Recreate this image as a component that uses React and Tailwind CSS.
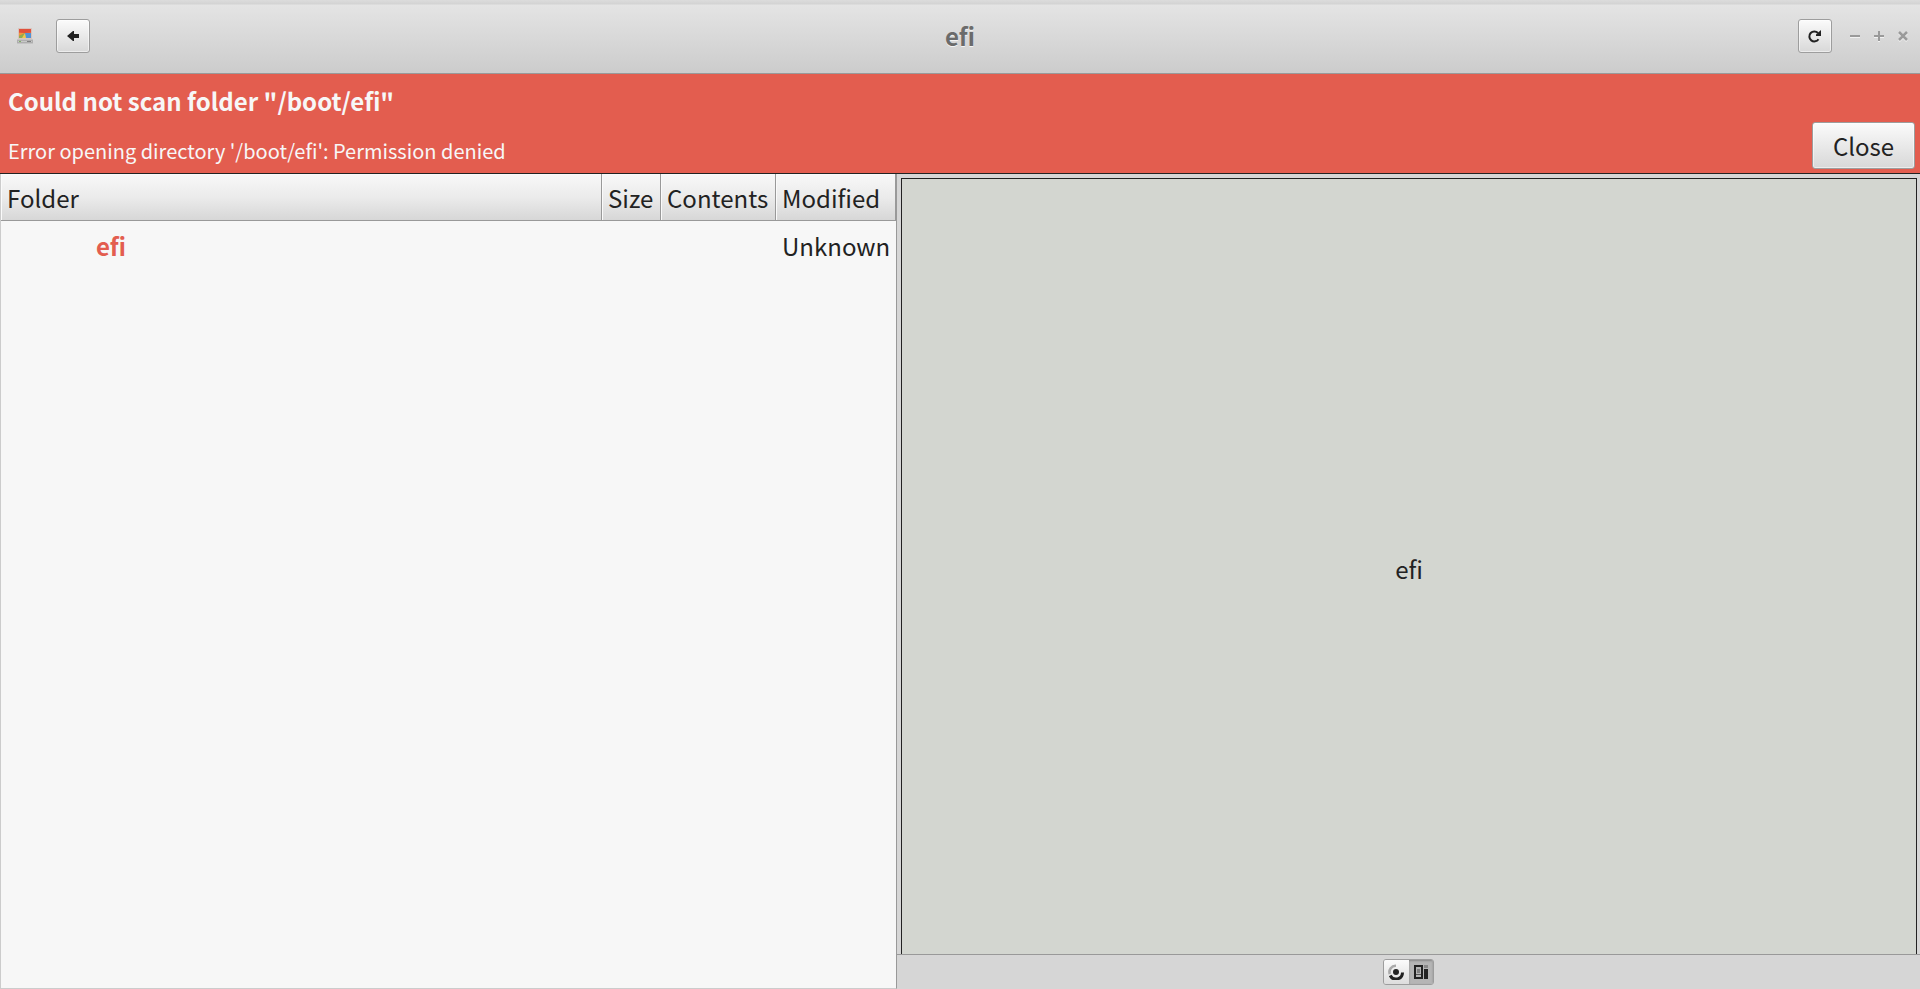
import React, { useState } from "react";

const raised = "border border-[#9d9d9d] rounded-[3px] bg-linear-to-b from-[#fbfbfb] to-[#d8d8d8] shadow-[inset_0_0_0_1px_#ffffff80]";
const headCell = "border-b border-r border-[#999999] pt-0.5 pr-1 pl-1.5 text-left font-normal shadow-[inset_1px_1px_0_#fafafa]";

function DiskIcon() {
  return (
    <svg width="16" height="16" viewBox="0 0 16 16" aria-hidden="true">
      <path d="M1 0h14v11H1z" fill="#d9c4bc" />
      <path d="M2 1h12v9H2z" fill="#e8663f" />
      <path d="M2 1h12v3l-6 1l-6-1z" fill="#e0503c" />
      <path d="M2 5l6 0l-6 3z" fill="#ee9a3c" />
      <path d="M2 8l6-3l-2 5H2z" fill="#8dae55" />
      <path d="M8 5l6 0v5H6z" fill="#4f92d6" />
      <path d="M8 5l1 5H5z" fill="#f0ca4a" />
      <path d="M0 11h16v5H0z" fill="#c4c4c4" />
      <path d="M0 12h16v3H0z" fill="#aeaeae" />
      <path d="M1 13h14v1H1z" fill="#c8c8c8" />
      <path d="M2 13h2v1H2z" fill="#7fb060" />
      <path d="M10 13h4v1h-4z" fill="#808080" />
    </svg>
  );
}

function TitleBar({ title }) {
  return (
    <header className="grid h-[74px] shrink-0 grid-cols-[1fr_auto_1fr] items-center border-b border-[#999999] bg-[linear-gradient(#dcdcdc_0px,#d3d3d3_4px,#e4e4e4_5px,#cccccc_100%)] px-[17px] pb-px">
      <div className="flex items-center">
        <DiskIcon />
        <button aria-label="Back" className={`${raised} ml-[23px] flex h-[34px] w-[34px] items-center justify-center`}>
          <svg width="16" height="16" viewBox="0 0 16 16" aria-hidden="true">
            <path d="M2 8l6-5h1v3h5v4H9v3H8z" fill="#222222" />
          </svg>
        </button>
      </div>
      <h1 className="text-center text-2xl font-bold text-[#6b6b6b] [text-shadow:0_1px_#f4f4f4]">{title}</h1>
      <div className="flex items-center justify-end">
        <button aria-label="Rescan" className={`${raised} flex h-[34px] w-[34px] items-center justify-center`}>
          <svg width="16" height="16" viewBox="0 0 16 16" aria-hidden="true">
            <path d="M11 5A5 5 0 1 0 11.5 11.2" fill="none" stroke="#222222" strokeWidth="2" />
            <path d="M14 2v6H9v-1.5z" fill="#222222" />
          </svg>
        </button>
        <div className="-mr-2 ml-[15px] flex gap-2 text-[#9a9a9a] drop-shadow-[0_1px_0_#f2f2f2]">
          <button aria-label="Minimize">
            <svg width="16" height="16" viewBox="0 0 16 16"><path d="M3 8h10" stroke="currentColor" strokeWidth="2" /></svg>
          </button>
          <button aria-label="Maximize">
            <svg width="16" height="16" viewBox="0 0 16 16"><path d="M3 8h10M8 3v10" stroke="currentColor" strokeWidth="2" /></svg>
          </button>
          <button aria-label="Close window">
            <svg width="16" height="16" viewBox="0 0 16 16"><path d="M4 4l8 8M12 4l-8 8" stroke="currentColor" strokeWidth="2.5" /></svg>
          </button>
        </div>
      </div>
    </header>
  );
}

function ErrorBar({ onClose }) {
  return (
    <div role="alert" className="flex shrink-0 items-end justify-between border-b border-[#222222] bg-[#e35d4f] pr-[5px] pb-1 text-[#f7f7f7]">
      <div className="pt-[9px] pb-0.5 pl-2">
        <p className="text-2xl leading-9 font-bold">Could not scan folder "/boot/efi"</p>
        <p className="mt-4 text-xl leading-8">Error opening directory '/boot/efi': Permission denied</p>
      </div>
      <button onClick={onClose} className={`${raised} h-[47px] w-[103px] text-2xl text-[#222222]`}>Close</button>
    </div>
  );
}

function FolderTable() {
  return (
    <div className="min-w-0 flex-7 border-r border-b border-l border-r-[#999999] border-b-[#cccccc] border-l-[#cccccc] bg-[#f7f7f7]">
      <table className="w-full table-fixed border-separate border-spacing-0 text-2xl text-[#222222]">
        <thead className="bg-linear-to-b from-[#f8f8f8] via-[#ebebeb] to-[#d6d6d6]">
          <tr className="h-[47px]">
            <th className={headCell}>Folder</th>
            <th className={`${headCell} w-[59px]`}>Size</th>
            <th className={`${headCell} w-[115px]`}>Contents</th>
            <th className={`${headCell} w-[120px]`}>Modified</th>
          </tr>
        </thead>
        <tbody>
          <tr className="h-[50px]">
            <td className="pl-[95px] font-bold text-[#e35d4f]">efi</td>
            <td></td>
            <td></td>
            <td className="pl-1.5 text-left">Unknown</td>
          </tr>
        </tbody>
      </table>
    </div>
  );
}

function ChartPane() {
  const [view, setView] = useState("treemap");
  const idle = "bg-linear-to-b from-[#fbfbfb] to-[#dddddd]";
  const active = "bg-[#b5b5b5] shadow-[inset_0_1px_2px_#888888]";

  return (
    <div className="flex min-w-0 flex-8 flex-col bg-[#d6d6d6]">
      <div className="flex flex-1 pt-1 pr-[3px] pl-1">
        <div className="flex flex-1 items-center justify-center border border-b-0 border-[#222222] bg-[#d3d6d0] pt-1 text-2xl text-[#222222]">
          efi
        </div>
      </div>
      <div className="flex h-[35px] shrink-0 items-center justify-center border-t border-[#999999]">
        <div className="flex h-[26px] w-[51px] overflow-hidden rounded-[3px] border border-[#9d9d9d]">
          <button aria-label="Rings chart" onClick={() => setView("rings")} className={`flex flex-1 items-center justify-center ${view === "rings" ? active : idle}`}>
            <svg width="16" height="16" viewBox="0 0 16 16" aria-hidden="true">
              <path d="M1.8 10A6.2 6.2 0 0 1 8 1.8" fill="none" stroke="#aaaaaa" strokeWidth="2.6" />
              <path d="M14.5 8.5A6.5 6.5 0 0 1 2.2 11.5" fill="none" stroke="#222222" strokeWidth="3" />
              <circle cx="8" cy="8" r="3" fill="#222222" />
            </svg>
          </button>
          <button aria-label="Treemap chart" onClick={() => setView("treemap")} className={`flex flex-1 items-center justify-center ${view === "treemap" ? active : idle}`}>
            <svg width="16" height="16" viewBox="0 0 16 16" aria-hidden="true">
              <path d="M1 1h9v14H1zM3 3v10h5V3z" fill="#222222" fillRule="evenodd" />
              <path d="M4 5h3v4H4z" fill="#808080" />
              <path d="M3 10h5v1H3z" fill="#555555" />
              <path d="M11 1h4v3h-4z" fill="#888888" />
              <path d="M11 5h4v10h-4z" fill="#222222" />
            </svg>
          </button>
        </div>
      </div>
    </div>
  );
}

const App = () => {
  const [showError, setShowError] = useState(true);

  return (
    <div className="flex min-h-screen flex-col bg-[#d6d6d6] font-['Noto_Sans_CJK_SC',sans-serif]">
      <TitleBar title="efi" />
      {showError && <ErrorBar onClose={() => setShowError(false)} />}
      <main className="flex flex-1">
        <FolderTable />
        <ChartPane />
      </main>
    </div>
  );
};

export default App;
